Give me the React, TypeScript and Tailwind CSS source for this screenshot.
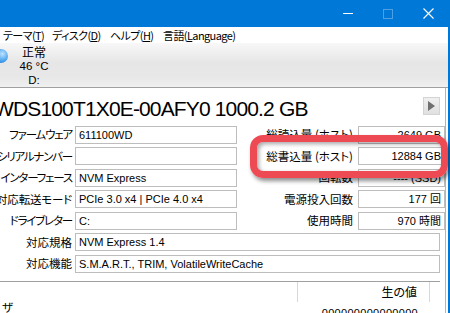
const rows = [
  { label: 'ファームウェア', tight: true, value: '611100WD', rLabel: '総読込量 (ホスト)', rValue: '2649 GB' },
  { label: 'シリアルナンバー', tight: true, value: '', rLabel: '総書込量 (ホスト)', rValue: '12884 GB' },
  { label: 'インターフェース', tight: true, value: 'NVM Express', rLabel: '回転数', rValue: '---- (SSD)' },
  { label: '対応転送モード', tight: false, value: 'PCIe 3.0 x4 | PCIe 4.0 x4', rLabel: '電源投入回数', rValue: '177 回' },
  { label: 'ドライブレター', tight: true, value: 'C:', rLabel: '使用時間', rValue: '970 時間' },
];

const wideRows = [
  { label: '対応規格', value: 'NVM Express 1.4' },
  { label: '対応機能', value: 'S.M.A.R.T., TRIM, VolatileWriteCache' },
];

const jp = "font-['Noto_Sans_CJK_JP',sans-serif] [font-feature-settings:'palt'] text-[11.5px]";
const field = 'h-[18px] border border-[#bdbdbd] bg-white flex items-center whitespace-nowrap overflow-hidden';

const Label = ({ text, className }: { text: string; className: string }) => (
  <div className={`flex justify-end whitespace-nowrap ${jp} ${className}`}>
    <span>{text}</span>
  </div>
);

const MenuItem = ({ text, k, className }: { text: string; k: string; className: string }) => (
  <span className={`whitespace-nowrap shrink-0 ${className}`}>
    {text}(<u>{k}</u>)
  </span>
);

export default function App() {
  return (
    <div className="w-[450px] h-[313px] overflow-hidden relative bg-white text-black font-['Liberation_Sans','Noto_Sans_CJK_JP',sans-serif] flex flex-col">
      {/* title bar */}
      <div className="h-[27px] bg-[#0078d7] flex justify-end pr-[2px] shrink-0">
        <div className="w-[40px] flex items-center justify-center">
          <div className="w-[10px] h-[1px] bg-white" />
        </div>
        <div className="w-[40px] flex items-center justify-center">
          <div className="w-[10px] h-[10px] border border-white/30" />
        </div>
        <div className="w-[40px] flex items-center justify-center">
          <svg width="11" height="11" viewBox="0 0 11 11">
            <path d="M0.5 0.5L10.5 10.5M10.5 0.5L0.5 10.5" stroke="white" strokeWidth="1.1" />
          </svg>
        </div>
      </div>

      <div className="flex-1 flex flex-col border-r-[2px] border-[#0078d7] min-h-0">
        {/* menu bar */}
        <div className={`h-[16px] shrink-0 flex items-center pl-[3px] pt-[1px] ${jp} text-[11px] tracking-[-0.6px]`}>
          <MenuItem text="テーマ" k="T" className="w-[49px]" />
          <MenuItem text="ディスク" k="D" className="w-[58px]" />
          <MenuItem text="ヘルプ" k="H" className="w-[53px]" />
          <span className="whitespace-nowrap">
            言語(<u>L</u>anguage)
          </span>
        </div>

        {/* toolbar */}
        <div className="h-[45px] shrink-0 border-b border-[#a0a0a0] bg-[linear-gradient(#f8f8f8,#e6e6e6_45%,#e8e8e8_80%,#f0f0f0)] flex pt-[2px]">
          <div className="w-[14px] h-[14px] rounded-full -ml-[6px] mt-[4px] bg-[radial-gradient(circle_at_60%_35%,#bfe3ff,#4aa3ef_55%,#1c6fc4)]" />
          <div className="ml-[11px] w-[30px] flex flex-col items-center text-[12px] leading-[14px]">
            <span className={jp + ' text-[12px]'}>正常</span>
            <span className="text-[11.5px]">46 °C</span>
            <span className="text-[11.5px]">D:</span>
          </div>
        </div>

        {/* main panel */}
        <div className="flex-1 w-[446px] border-r border-[#b4b4b4] flex flex-col min-h-0">
          <div className="h-[36px] shrink-0 flex">
            <div className="flex-1 flex items-center pt-[5px] -ml-[6px] text-[21px] tracking-[-0.85px] whitespace-nowrap">
              WDS100T1X0E-00AFY0 1000.2 GB
            </div>
            <div className="mt-[9px] mr-[5px] w-[17px] h-[18px] border border-[#d4d4d4] bg-[linear-gradient(#f0f0f0,#e0e0e0)] flex items-center justify-center">
              <div className="w-0 h-0 border-y-[5px] border-y-transparent border-l-[7px] border-l-[#707070]" />
            </div>
          </div>

          <div className="flex flex-col text-[11px]">
            {rows.map((r) => (
              <div key={r.label} className="h-[21.5px] flex items-center">
                <Label
                  text={r.label}
                  className={`w-[72px] shrink-0 ${r.tight ? 'tracking-[-1.2px]' : 'tracking-[-0.2px]'}`}
                />
                <div className={`ml-[3px] w-[162px] shrink-0 pl-[3px] ${field}`}>{r.value}</div>
                <Label text={r.rLabel} className="flex-1 min-w-0" />
                <div className={`ml-[5px] w-[87px] shrink-0 justify-end pr-[3px] ${field}`}>{r.rValue}</div>
              </div>
            ))}
            {wideRows.map((r) => (
              <div key={r.label} className="h-[21.5px] flex items-center">
                <Label text={r.label} className="w-[72px] shrink-0" />
                <div className={`ml-[3px] w-[365px] shrink-0 pl-[3px] ${field}`}>{r.value}</div>
              </div>
            ))}
          </div>

          {/* smart list */}
          <div className="mt-[6px] flex-1 border-t border-[#a0a0a0] mr-[5px] flex flex-col text-[11px]">
            <div className="h-[20px] flex">
              <div className="w-[298px] border-r border-[#d8d8d8]" />
              <div className={`w-[132px] border-r border-[#d8d8d8] flex items-center justify-end pr-[12px] ${jp} text-[12px]`}>
                生の値
              </div>
            </div>
            <div className="h-[18px] flex items-center">
              <div className={`w-[298px] pl-[2px] -mt-[6px] ${jp}`}>ザ</div>
              <div className="w-[132px] flex justify-end pr-[12px] pt-[6px] tracking-[0.3px]">000000000000000</div>
            </div>
          </div>
        </div>
      </div>

      {/* red highlight overlay */}
      <div className="absolute left-[250px] top-[135px] w-[198px] h-[43px] rounded-[13px] border-[7px] border-[#ee4a54] shadow-[2px_3px_4px_rgba(0,0,0,0.45),inset_2px_2px_4px_rgba(0,0,0,0.35)]" />
    </div>
  );
}
